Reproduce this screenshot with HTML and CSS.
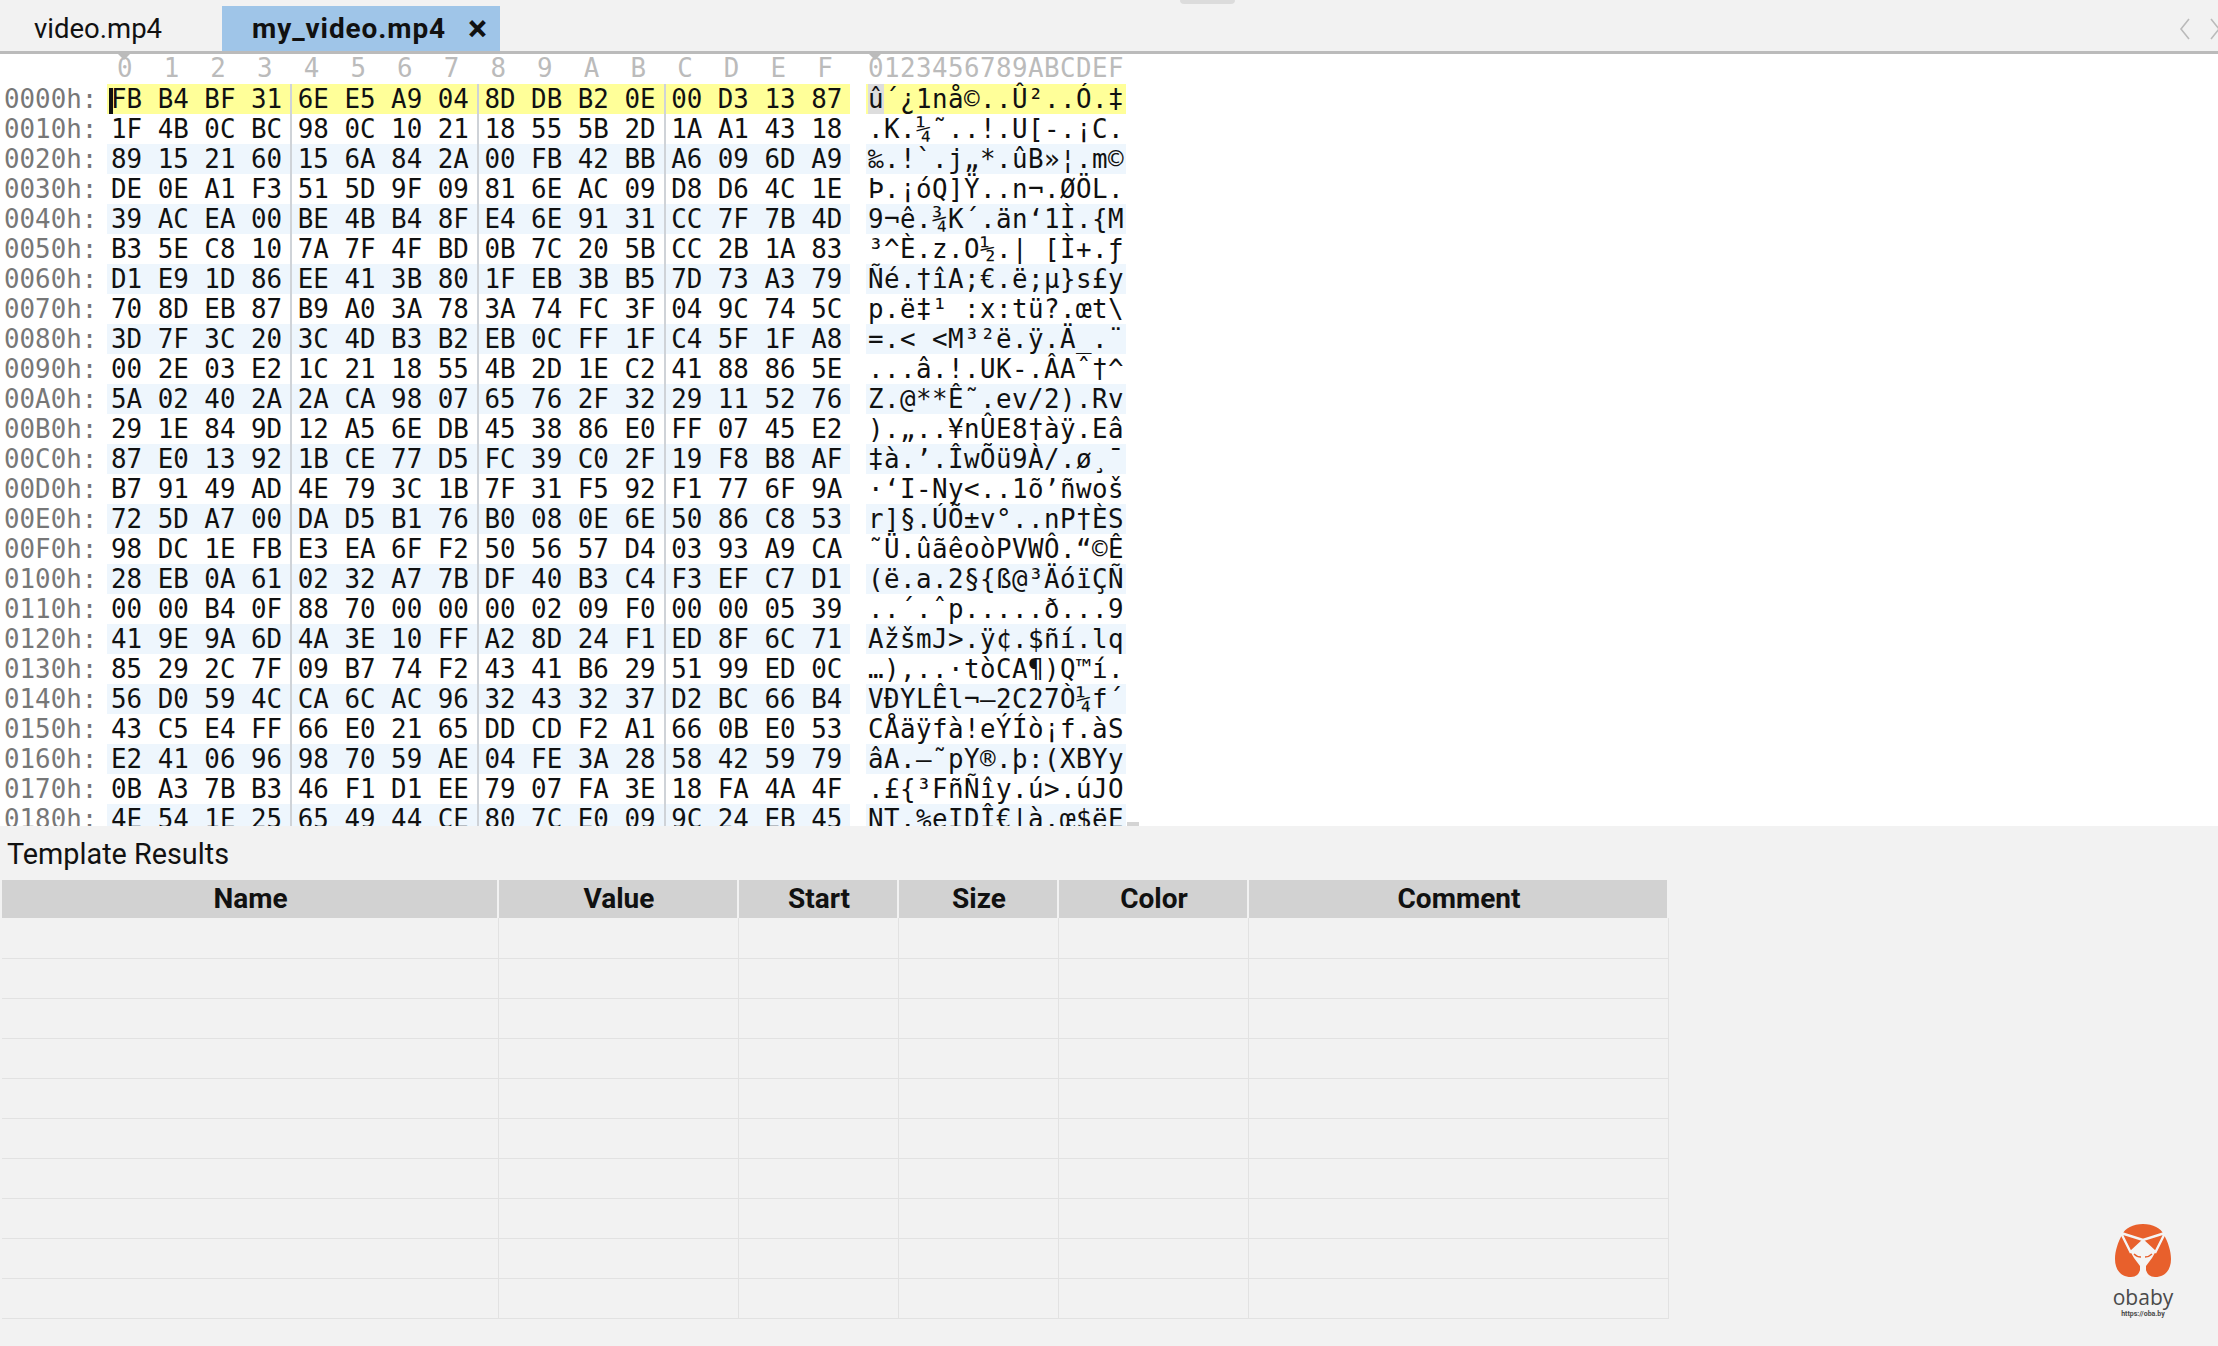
FILE: index.html
```html
<!DOCTYPE html>
<html lang="en">
<head>
    <meta charset="UTF-8">
    <title>my_video.mp4</title>
    <link rel="stylesheet" href="styles.css">
</head>
<body>
    <div class="top-notch"></div>
    <div class="tabbar">
        <div class="tab">video.mp4</div>
        <div class="tab tab-active"><span>my_video.mp4</span><span class="tab-close">×</span></div>
        <div class="tab-arrows">
            <svg viewBox="0 0 12 24" width="12" height="24"><path fill="none" stroke="#bbb" stroke-width="1.6" d="M10 2L2 12L10 22"/></svg>
            <svg viewBox="0 0 12 24" width="12" height="24"><path fill="none" stroke="#bbb" stroke-width="1.6" d="M2 2L10 12L2 22"/></svg>
        </div>
    </div>

    <div class="hexview">
        <span class="marker marker-hex"></span>
        <span class="marker marker-ascii"></span>
        <div class="row ruler"><div class="addr"></div><div class="hex">0  1  2  3  4  5  6  7  8  9  A  B  C  D  E  F</div><div class="ascii">0123456789ABCDEF</div></div>
        <div class="row row-yellow"><div class="addr">0000h:</div><div class="hex"><span class="cursor"></span>FB B4 BF 31 6E E5 A9 04 8D DB B2 0E 00 D3 13 87</div><div class="ascii"><span class="ascii-cur">û</span>´¿1nå©..Û²..Ó.‡</div></div>
        <div class="row"><div class="addr">0010h:</div><div class="hex">1F 4B 0C BC 98 0C 10 21 18 55 5B 2D 1A A1 43 18</div><div class="ascii">.K.¼˜..!.U[-.¡C.</div></div>
        <div class="row row-blue"><div class="addr">0020h:</div><div class="hex">89 15 21 60 15 6A 84 2A 00 FB 42 BB A6 09 6D A9</div><div class="ascii">‰.!`.j„*.ûB»¦.m©</div></div>
        <div class="row"><div class="addr">0030h:</div><div class="hex">DE 0E A1 F3 51 5D 9F 09 81 6E AC 09 D8 D6 4C 1E</div><div class="ascii">Þ.¡óQ]Ÿ..n¬.ØÖL.</div></div>
        <div class="row row-blue"><div class="addr">0040h:</div><div class="hex">39 AC EA 00 BE 4B B4 8F E4 6E 91 31 CC 7F 7B 4D</div><div class="ascii">9¬ê.¾K´.än‘1Ì.{M</div></div>
        <div class="row"><div class="addr">0050h:</div><div class="hex">B3 5E C8 10 7A 7F 4F BD 0B 7C 20 5B CC 2B 1A 83</div><div class="ascii">³^È.z.O½.| [Ì+.ƒ</div></div>
        <div class="row row-blue"><div class="addr">0060h:</div><div class="hex">D1 E9 1D 86 EE 41 3B 80 1F EB 3B B5 7D 73 A3 79</div><div class="ascii">Ñé.†îA;€.ë;µ}s£y</div></div>
        <div class="row"><div class="addr">0070h:</div><div class="hex">70 8D EB 87 B9 A0 3A 78 3A 74 FC 3F 04 9C 74 5C</div><div class="ascii">p.ë‡¹ :x:tü?.œt\</div></div>
        <div class="row row-blue"><div class="addr">0080h:</div><div class="hex">3D 7F 3C 20 3C 4D B3 B2 EB 0C FF 1F C4 5F 1F A8</div><div class="ascii">=.&lt; &lt;M³²ë.ÿ.Ä_.¨</div></div>
        <div class="row"><div class="addr">0090h:</div><div class="hex">00 2E 03 E2 1C 21 18 55 4B 2D 1E C2 41 88 86 5E</div><div class="ascii">...â.!.UK-.ÂAˆ†^</div></div>
        <div class="row row-blue"><div class="addr">00A0h:</div><div class="hex">5A 02 40 2A 2A CA 98 07 65 76 2F 32 29 11 52 76</div><div class="ascii">Z.@**Ê˜.ev/2).Rv</div></div>
        <div class="row"><div class="addr">00B0h:</div><div class="hex">29 1E 84 9D 12 A5 6E DB 45 38 86 E0 FF 07 45 E2</div><div class="ascii">).„..¥nÛE8†àÿ.Eâ</div></div>
        <div class="row row-blue"><div class="addr">00C0h:</div><div class="hex">87 E0 13 92 1B CE 77 D5 FC 39 C0 2F 19 F8 B8 AF</div><div class="ascii">‡à.’.ÎwÕü9À/.ø¸¯</div></div>
        <div class="row"><div class="addr">00D0h:</div><div class="hex">B7 91 49 AD 4E 79 3C 1B 7F 31 F5 92 F1 77 6F 9A</div><div class="ascii">·‘I-Ny&lt;..1õ’ñwoš</div></div>
        <div class="row row-blue"><div class="addr">00E0h:</div><div class="hex">72 5D A7 00 DA D5 B1 76 B0 08 0E 6E 50 86 C8 53</div><div class="ascii">r]§.ÚÕ±v°..nP†ÈS</div></div>
        <div class="row"><div class="addr">00F0h:</div><div class="hex">98 DC 1E FB E3 EA 6F F2 50 56 57 D4 03 93 A9 CA</div><div class="ascii">˜Ü.ûãêoòPVWÔ.“©Ê</div></div>
        <div class="row row-blue"><div class="addr">0100h:</div><div class="hex">28 EB 0A 61 02 32 A7 7B DF 40 B3 C4 F3 EF C7 D1</div><div class="ascii">(ë.a.2§{ß@³ÄóïÇÑ</div></div>
        <div class="row"><div class="addr">0110h:</div><div class="hex">00 00 B4 0F 88 70 00 00 00 02 09 F0 00 00 05 39</div><div class="ascii">..´.ˆp.....ð...9</div></div>
        <div class="row row-blue"><div class="addr">0120h:</div><div class="hex">41 9E 9A 6D 4A 3E 10 FF A2 8D 24 F1 ED 8F 6C 71</div><div class="ascii">AžšmJ&gt;.ÿ¢.$ñí.lq</div></div>
        <div class="row"><div class="addr">0130h:</div><div class="hex">85 29 2C 7F 09 B7 74 F2 43 41 B6 29 51 99 ED 0C</div><div class="ascii">…),..·tòCA¶)Q™í.</div></div>
        <div class="row row-blue"><div class="addr">0140h:</div><div class="hex">56 D0 59 4C CA 6C AC 96 32 43 32 37 D2 BC 66 B4</div><div class="ascii">VÐYLÊl¬–2C27Ò¼f´</div></div>
        <div class="row"><div class="addr">0150h:</div><div class="hex">43 C5 E4 FF 66 E0 21 65 DD CD F2 A1 66 0B E0 53</div><div class="ascii">CÅäÿfà!eÝÍò¡f.àS</div></div>
        <div class="row row-blue"><div class="addr">0160h:</div><div class="hex">E2 41 06 96 98 70 59 AE 04 FE 3A 28 58 42 59 79</div><div class="ascii">âA.–˜pY®.þ:(XBYy</div></div>
        <div class="row"><div class="addr">0170h:</div><div class="hex">0B A3 7B B3 46 F1 D1 EE 79 07 FA 3E 18 FA 4A 4F</div><div class="ascii">.£{³FñÑîy.ú&gt;.úJO</div></div>
        <div class="row row-blue"><div class="addr">0180h:</div><div class="hex">4E 54 1E 25 65 49 44 CE 80 7C E0 09 9C 24 EB 45</div><div class="ascii">NT.%eIDÎ€|à.œ$ëE</div></div>
        <span class="split-handle"></span>
    </div>

    <div class="results">
        <div class="results-title">Template Results</div>
        <table class="results-table">
            <thead>
                <tr><th class="col-name">Name</th><th class="col-value">Value</th><th class="col-start">Start</th><th class="col-size">Size</th><th class="col-color">Color</th><th class="col-comment">Comment</th></tr>
            </thead>
            <tbody>
                <tr><td></td><td></td><td></td><td></td><td></td><td></td></tr>
                <tr><td></td><td></td><td></td><td></td><td></td><td></td></tr>
                <tr><td></td><td></td><td></td><td></td><td></td><td></td></tr>
                <tr><td></td><td></td><td></td><td></td><td></td><td></td></tr>
                <tr><td></td><td></td><td></td><td></td><td></td><td></td></tr>
                <tr><td></td><td></td><td></td><td></td><td></td><td></td></tr>
                <tr><td></td><td></td><td></td><td></td><td></td><td></td></tr>
                <tr><td></td><td></td><td></td><td></td><td></td><td></td></tr>
                <tr><td></td><td></td><td></td><td></td><td></td><td></td></tr>
                <tr><td></td><td></td><td></td><td></td><td></td><td></td></tr>
            </tbody>
        </table>
    </div>

    <div class="watermark">
        <svg class="watermark-logo" viewBox="0 0 56 54" width="56" height="54">
            <path fill="#e8602c" d="M28 0C38 0 46 4 49 11C53 18 56 27 56 35C56 46 50 53 40 53C35 53 32 50 31 46L25 46C24 50 21 53 16 53C6 53 0 46 0 35C0 27 3 18 7 11C10 4 18 0 28 0Z"/>
            <path fill="#f4f4f4" d="M28 15L41 27L37 34L31 42L31 47L33 53L23 53L25 47L25 42L19 34L15 27Z"/>
            <path fill="none" stroke="#f4f4f4" stroke-width="2.4" d="M6 9L28 16L50 9M6 9L16 29M50 9L40 29"/>
            <path fill="none" stroke="#e8602c" stroke-width="1.4" d="M19 30Q22 33 26 33M37 30Q34 33 30 33"/>
        </svg>
        <div class="watermark-name">obaby</div>
        <div class="watermark-url">https://oba.by</div>
    </div>
</body>
</html>
```

FILE: styles.css
```css
* {
    box-sizing: border-box;
}
html, body {
    height: 100%;
}
body {
    margin: 0;
    position: relative;
    overflow: hidden;
    background-color: #f2f2f2;
    color: #111;
    font-family: Roboto, 'Liberation Sans', sans-serif;
}
.top-notch {
    position: absolute;
    top: 0;
    left: 1180px;
    width: 55px;
    height: 4px;
    background-color: #dcdcdc;
    border-radius: 0 0 5px 5px;
}

/* tabs */
.tabbar {
    display: flex;
    align-items: flex-end;
    height: 54px;
    padding-top: 6px;
    border-bottom: 3px solid #bbb;
    font-size: 27.5px;
}
.tab {
    display: flex;
    align-items: center;
    height: 45px;
    width: 222px;
    padding-left: 34px;
}
.tab-active {
    width: 278px;
    padding-left: 30px;
    gap: 22px;
    background-color: #9fc5e8;
    font-weight: 700;
    font-size: 28px;
    letter-spacing: 0.9px;
}
.tab-close {
    font-size: 36px;
}
.tab-arrows {
    display: flex;
    gap: 18px;
    margin-left: auto;
    height: 45px;
    align-items: center;
    margin-right: -3px;
}

/* hex editor */
.hexview {
    position: relative;
    height: 772px;
    background-color: #fff;
    overflow: hidden;
    font-family: 'DejaVu Sans Mono', monospace;
    font-size: 25.85px;
    line-height: 30px;
}
.row {
    display: flex;
    height: 30px;
}
.ruler {
    line-height: 29px;
    color: #bbb;
}
.addr, .hex, .ascii {
    white-space: pre;
}
.addr {
    width: 107px;
    padding-left: 4px;
    color: #777;
}
.hex {
    position: relative;
    width: 743px;
    padding-left: 4px;
    background-image: repeating-linear-gradient(to right, transparent 0, transparent 183px, #cfd3d8 183px, #cfd3d8 185px, transparent 185px, transparent 187px);
}
.ruler .hex {
    padding-left: 10px;
    background-image: none;
}
.ascii {
    width: 260px;
    margin-left: 16px;
    padding-left: 2px;
    letter-spacing: 0.44px;
}
.row-yellow .hex, .row-yellow .ascii {
    background-color: #ffff99;
}
.row-blue .hex, .row-blue .ascii {
    background-color: #eef6fd;
}
.ascii-cur {
    background-color: #dddddd;
}
.cursor {
    position: absolute;
    left: 2px;
    top: 4px;
    width: 4px;
    height: 26px;
    background-color: #111;
}
.marker {
    position: absolute;
    top: 0;
    width: 0;
    height: 0;
    border-left: 6px solid transparent;
    border-right: 6px solid transparent;
    border-top: 6px solid #bbb;
}
.marker-hex {
    left: 118px;
}
.marker-ascii {
    left: 869px;
}
.split-handle {
    position: absolute;
    left: 1127px;
    bottom: 0;
    width: 12px;
    height: 4px;
    background-color: #d4d4d4;
    z-index: 1;
}

/* template results */
.results-title {
    height: 54px;
    padding: 13px 0 0 7px;
    font-size: 28.8px;
    line-height: 30px;
}
.results-table {
    margin-left: 2px;
    width: 1666px;
    table-layout: fixed;
    border-collapse: collapse;
    font-size: 28px;
}
.results-table th {
    height: 38px;
    padding: 0 0 2px 2px;
    background-color: #d2d2d2;
    border-right: 2px solid #f2f2f2;
    font-weight: 700;
    text-align: center;
}
.results-table td {
    height: 40px;
    padding: 0;
    border-right: 1px solid #e2e2e2;
    border-bottom: 1px solid #e2e2e2;
}
.col-name { width: 496px; }
.col-value { width: 240px; }
.col-start { width: 160px; }
.col-size { width: 160px; }
.col-color { width: 190px; }
.col-comment { width: 420px; }

/* watermark */
.watermark {
    position: absolute;
    left: 2108px;
    top: 1224px;
    width: 70px;
    display: flex;
    flex-direction: column;
    align-items: center;
    color: #4a4a4a;
}
.watermark-name {
    margin-top: 7px;
    font-size: 21px;
    line-height: 24px;
    font-family: 'Open Sans', sans-serif;
}
.watermark-url {
    font-size: 7px;
    line-height: 10px;
    font-weight: 700;
}
```
